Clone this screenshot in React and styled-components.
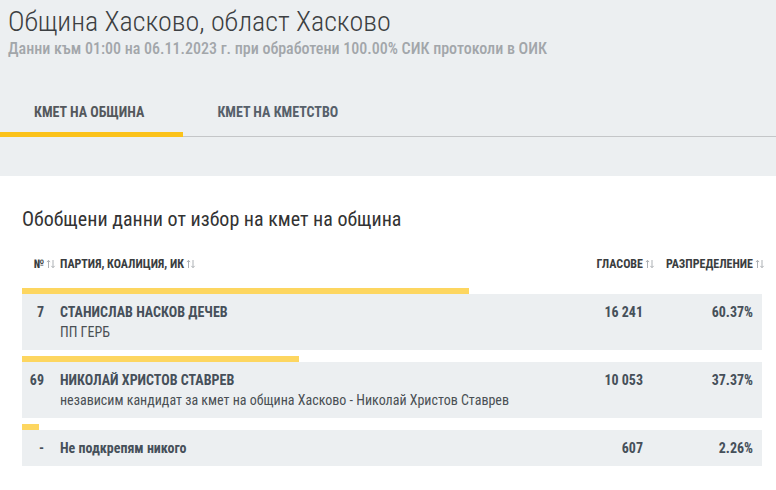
import React from "react"
import styled, { createGlobalStyle } from "styled-components"

const GlobalStyle = createGlobalStyle`
  body {
    margin: 0;
    background: #fff;
    font-family: "Roboto Condensed", Roboto, "Liberation Sans Narrow", sans-serif;
    font-stretch: condensed;
  }
`

const Top = styled.div`
  background: #eceff1;
  padding-top: 6px;
  padding-bottom: 39px;
`

const Title = styled.h1`
  margin: 0;
  padding-left: 8px;
  font-size: 28px;
  line-height: 32px;
  font-weight: 300;
  color: #3c3f42;
`

const Subtitle = styled.div`
  margin-top: 2px;
  padding-left: 8px;
  font-size: 16px;
  line-height: 18px;
  font-weight: 500;
  color: #a2a6aa;
`

const TabBar = styled.div`
  display: flex;
  margin-top: 30px;
  box-shadow: inset 0 -1px 0 #c4c6c8;
`

const Tab = styled.div`
  height: 49px;
  padding: 4px 39px 0 34px;
  box-sizing: border-box;
  display: flex;
  align-items: center;
  font-size: 14px;
  font-weight: 700;
  color: ${p => (p.$active ? "#54585c" : "#56606a")};
  border-bottom: 5px solid ${p => (p.$active ? "#fbc21a" : "transparent")};
`

const Main = styled.div`
  padding: 31px 14px 20px 22px;
`

const Heading = styled.h2`
  margin: 0;
  font-size: 20px;
  line-height: 24px;
  font-weight: 400;
  color: #333;
`

const Grid = styled.div`
  display: grid;
  grid-template-columns: 22px 1fr 90px 94px;
  column-gap: 16px;
  padding-right: 9px;
`

const HeadRow = styled(Grid)`
  margin-top: 21px;
  margin-bottom: 12px;
  height: 24px;
  align-items: center;
  font-size: 12px;
  font-weight: 700;
  color: #3a3d40;
`

const HeadCell = styled.div`
  text-align: ${p => (p.$right ? "right" : "left")};
`

const Sortable = styled.span`
  position: relative;
  display: inline-block;
`

const SortIcon = styled.svg`
  position: absolute;
  left: 100%;
  top: 2px;
  margin-left: 2px;
  width: 10px;
  height: 10px;
`

const Item = styled.div`
  margin-bottom: 6px;
`

const Bar = styled.div`
  height: 6px;
  background: #fdd660;
`

const Row = styled(Grid)`
  background: #eceff1;
  padding-top: 9px;
  padding-bottom: 9px;
  font-size: 14px;
  line-height: 18px;
  color: #46505a;
`

const Num = styled.div`
  text-align: right;
  font-weight: 700;
`

const Who = styled.div`
  display: flex;
  flex-direction: column;
  gap: 2px;
`

const Name = styled.div`
  font-weight: 700;
  text-transform: ${p => (p.$upper ? "uppercase" : "none")};
`

const Party = styled.div`
  color: #4a4f54;
`

const Value = styled.div`
  text-align: right;
  font-weight: 700;
`

const Arrows = () => (
  <SortIcon viewBox="0 0 10 10" fill="none" stroke="#adb1b5" strokeWidth="1">
    <path d="M2.5 9V1.5M0.9 3.1L2.5 1.3L4.1 3.1" />
    <path d="M7 1V8.5M5.4 6.9L7 8.7L8.6 6.9" />
  </SortIcon>
)

const results = [
  { num: "7", name: "Станислав Насков Дечев", party: "ПП ГЕРБ", votes: "16 241", pct: 60.37 },
  {
    num: "69",
    name: "Николай Христов Ставрев",
    party: "независим кандидат за кмет на община Хасково - Николай Христов Ставрев",
    votes: "10 053",
    pct: 37.37,
  },
  { num: "-", name: "Не подкрепям никого", votes: "607", pct: 2.26, plain: true },
]

export default function App() {
  return (
    <>
      <GlobalStyle />
      <Top>
        <Title>Община Хасково, област Хасково</Title>
        <Subtitle>Данни към 01:00 на 06.11.2023 г. при обработени 100.00% СИК протоколи в ОИК</Subtitle>
        <TabBar>
          <Tab $active>КМЕТ НА ОБЩИНА</Tab>
          <Tab>КМЕТ НА КМЕТСТВО</Tab>
        </TabBar>
      </Top>
      <Main>
        <Heading>Обобщени данни от избор на кмет на община</Heading>
        <HeadRow>
          <HeadCell $right>
            <Sortable>№<Arrows /></Sortable>
          </HeadCell>
          <HeadCell>
            <Sortable>ПАРТИЯ, КОАЛИЦИЯ, ИК<Arrows /></Sortable>
          </HeadCell>
          <HeadCell $right>
            <Sortable>ГЛАСОВЕ<Arrows /></Sortable>
          </HeadCell>
          <HeadCell $right>
            <Sortable>РАЗПРЕДЕЛЕНИЕ<Arrows /></Sortable>
          </HeadCell>
        </HeadRow>
        {results.map(r => (
          <Item key={r.num}>
            <Bar style={{ width: `${r.pct}%` }} />
            <Row>
              <Num>{r.num}</Num>
              <Who>
                <Name $upper={!r.plain}>{r.name}</Name>
                {r.party && <Party>{r.party}</Party>}
              </Who>
              <Value>{r.votes}</Value>
              <Value>{r.pct.toFixed(2)}%</Value>
            </Row>
          </Item>
        ))}
      </Main>
    </>
  )
}
